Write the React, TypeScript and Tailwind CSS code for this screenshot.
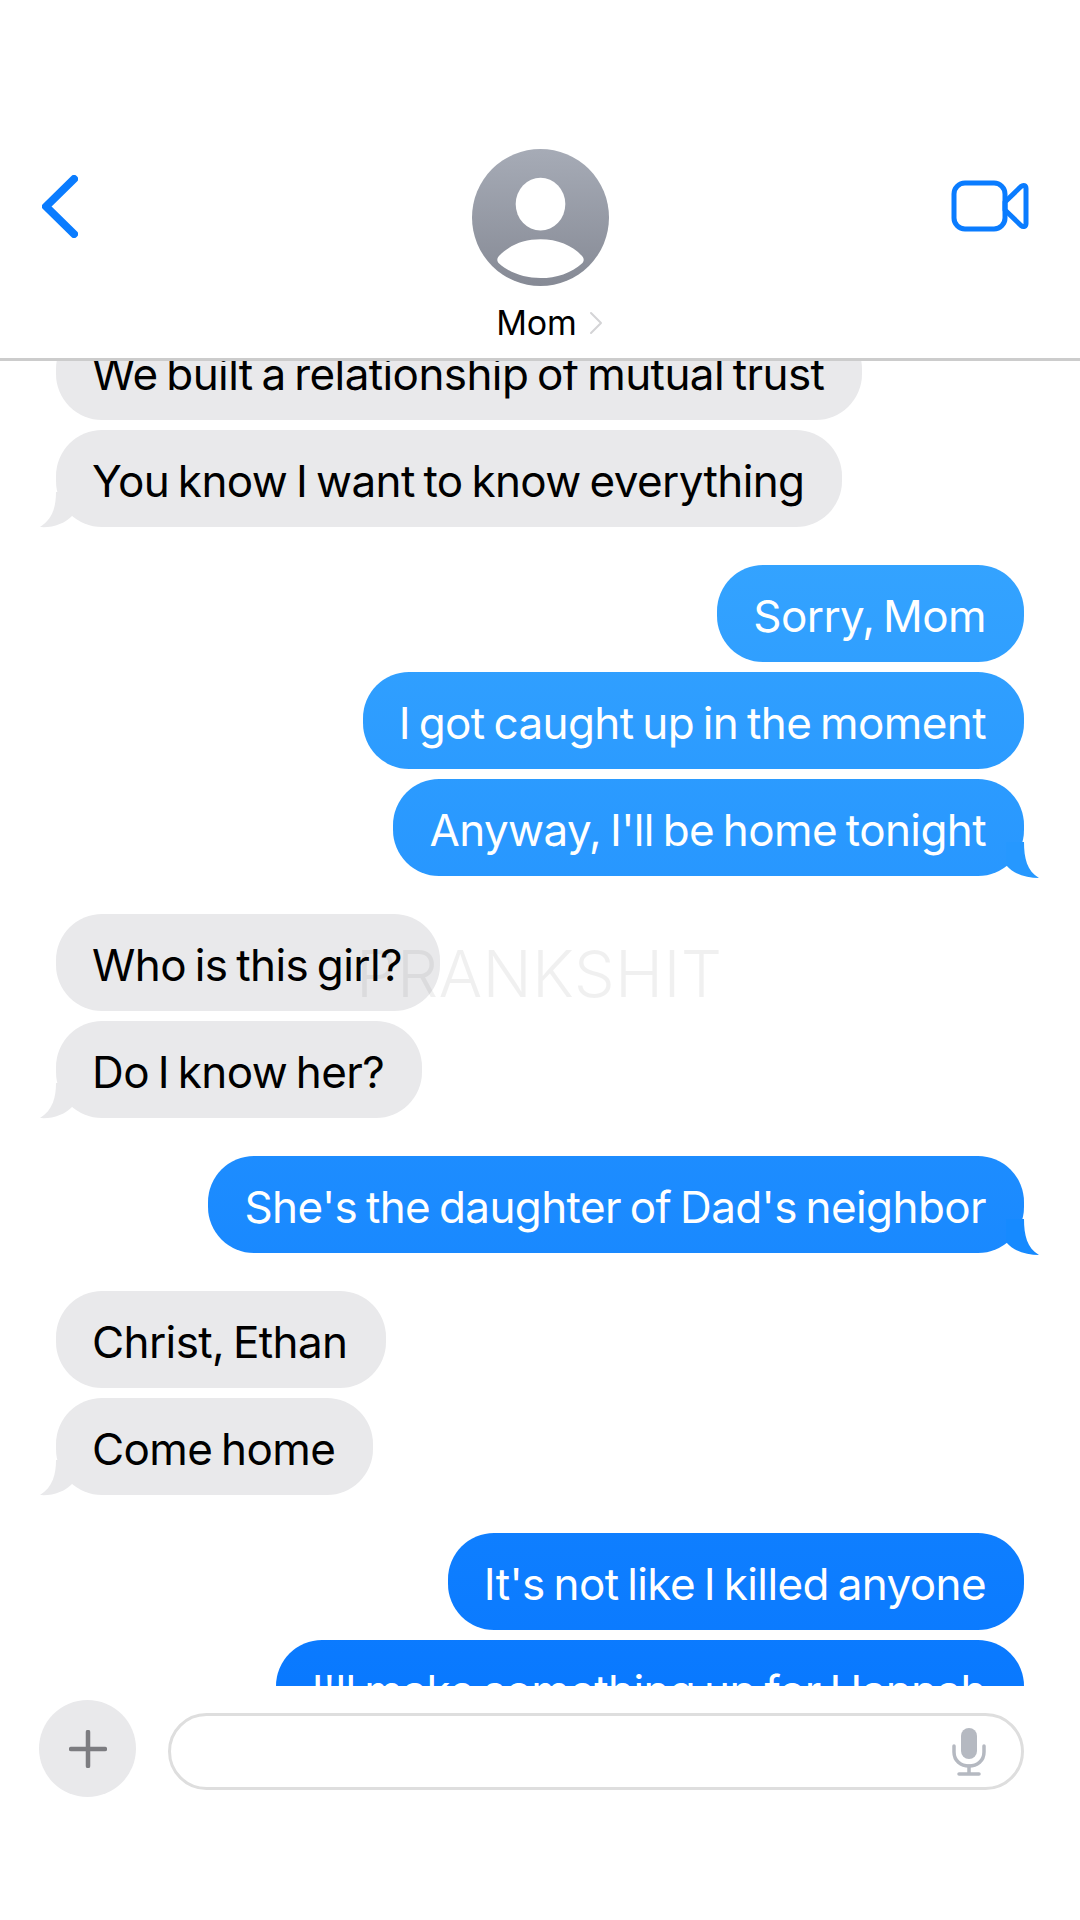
const FONT = "font-['Inter','Liberation_Sans',sans-serif]";

type Message = {
  id: number;
  text: string;
  mine: boolean;
  tail?: boolean;
  tailColor?: string;
  first?: boolean;
};

const MESSAGES: Message[] = [
  { id: 1, text: "We built a relationship of mutual trust", mine: false },
  { id: 2, text: "You know I want to know everything", mine: false, tail: true },
  { id: 3, text: "Sorry, Mom", mine: true, first: true },
  { id: 4, text: "I got caught up in the moment", mine: true },
  { id: 5, text: "Anyway, I'll be home tonight", mine: true, tail: true, tailColor: "#2698ff" },
  { id: 6, text: "Who is this girl?", mine: false, first: true },
  { id: 7, text: "Do I know her?", mine: false, tail: true },
  { id: 8, text: "She's the daughter of Dad's neighbor", mine: true, first: true, tail: true, tailColor: "#168aff" },
  { id: 9, text: "Christ, Ethan", mine: false, first: true },
  { id: 10, text: "Come home", mine: false, tail: true },
  { id: 11, text: "It's not like I killed anyone", mine: true, first: true },
  { id: 12, text: "I'll make something up for Hannah", mine: true },
];

function Bubble({ message }: { message: Message }) {
  const { text, mine, tail, tailColor, first } = message;
  return (
    <div className={`flex ${mine ? "justify-end" : "justify-start"} ${first ? "mt-[38px]" : "mt-[10px]"}`}>
      <div
        className={`relative flex h-[97px] items-center whitespace-nowrap rounded-[46px] pl-[36px] pr-[38px] pt-[4px] text-[44px] tracking-[-0.6px] [word-spacing:-3px] ${
          mine
            ? "bg-[linear-gradient(to_bottom,#49b8ff,#0070ff)] bg-fixed text-white"
            : "bg-[#e9e9eb] text-black"
        }`}
      >
        {text}
        {tail && !mine && (
          <svg className="absolute bottom-[-1px] left-[-16px]" width="40" height="40" viewBox="0 0 40 40">
            <path d="M16 4 C16 18 13 31 0 39 C12 40 25 36 33 27 L33 4 Z" fill="#e9e9eb" />
          </svg>
        )}
        {tail && mine && (
          <svg className="absolute bottom-[-2px] right-[-15px]" width="40" height="40" viewBox="0 0 40 40">
            <path d="M25 4 C25 20 28 33 40 40 C28 40 15 37 7 27 L7 4 Z" fill={tailColor} />
          </svg>
        )}
      </div>
    </div>
  );
}

export default function App() {
  return (
    <div className={`${FONT} flex h-[1920px] w-[1080px] flex-col overflow-hidden bg-white`}>
      <header className="grid h-[361px] shrink-0 grid-cols-[1fr_auto_1fr] items-start border-b-[3px] border-[#cccccc] pt-[149px]">
        <div className="pl-[42px] pt-[26px]">
          <svg width="36" height="63" viewBox="0 0 36 63" fill="none">
            <path d="M32 4 L4 31.5 L32 59" stroke="#0a7cff" strokeWidth="8" strokeLinecap="round" strokeLinejoin="round" />
          </svg>
        </div>
        <div className="flex flex-col items-center">
          <svg width="137" height="137" viewBox="0 0 138 138">
            <defs>
              <linearGradient id="avatar" x1="0" y1="0" x2="0" y2="1">
                <stop offset="0" stopColor="#a6abb6" />
                <stop offset="1" stopColor="#868a95" />
              </linearGradient>
            </defs>
            <circle cx="69" cy="69" r="69" fill="url(#avatar)" />
            <ellipse cx="69" cy="55.5" rx="25" ry="26.5" fill="#ffffff" />
            <path d="M27 108 C37 97 52 91 69 91 C86 91 101 97 111 108 C113 110 113 113 111 115 C100 125 85 130 69 130 C53 130 38 125 27 115 C25 113 25 110 27 108 Z" fill="#ffffff" />
          </svg>
          <div className="mt-[17px] flex items-center pl-[19px] text-[34px] leading-[40px] tracking-[-0.2px] text-black">
            Mom
            <svg className="ml-[12px]" width="14" height="24" viewBox="0 0 14 24" fill="none">
              <path d="M2 2 L12 12 L2 22" stroke="#d4d4d6" strokeWidth="2" strokeLinecap="round" strokeLinejoin="round" />
            </svg>
          </div>
        </div>
        <div className="flex justify-end pr-[51px] pt-[31px]">
          <svg width="78" height="52" viewBox="0 0 78 52" fill="none" stroke="#0a7cff" strokeWidth="5" strokeLinejoin="round">
            <rect x="3" y="3" width="51" height="46" rx="11" />
            <path d="M54 22 L70 6.5 C72.5 4.5 75 5.5 75 8.5 L75 43.5 C75 46.5 72.5 47.5 70 45.5 L54 30 Z" />
          </svg>
        </div>
      </header>

      <main className="relative h-[1325px] shrink-0 overflow-hidden">
        <div className="-mt-[48px] flex flex-col px-[56px]">
          {MESSAGES.map((message) => (
            <Bubble key={message.id} message={message} />
          ))}
        </div>
        <div className="absolute left-[356px] top-[568px] text-[65px] font-light leading-[90px] tracking-[0.2px] text-black/[0.06]">
          PRANKSHIT
        </div>
      </main>

      <footer className="flex items-start gap-[32px] pl-[39px] pr-[56px] pt-[14px]">
        <div className="flex h-[97px] w-[97px] shrink-0 items-center justify-center rounded-full bg-[#e9e9eb]">
          <svg width="38" height="38" viewBox="0 0 38 38" fill="none" stroke="#7c7c80" strokeWidth="4.5" strokeLinecap="round">
            <path d="M19 2 V36" />
            <path d="M2 19 H36" />
          </svg>
        </div>
        <div className="mt-[13px] flex h-[77px] flex-1 items-center justify-end rounded-full border-[3px] border-[#dedede] pr-[35px]">
          <svg width="34" height="48" viewBox="0 0 34 48" fill="none">
            <rect x="9" y="0" width="16" height="31" rx="8" fill="#b5b9c1" />
            <path d="M2 18 V24 C2 33 9 38 17 38 C25 38 32 33 32 24 V18" stroke="#b5b9c1" strokeWidth="3.5" strokeLinecap="round" />
            <path d="M17 38 V46 M7 46 H27" stroke="#b5b9c1" strokeWidth="3.5" strokeLinecap="round" />
          </svg>
        </div>
      </footer>
    </div>
  );
}
